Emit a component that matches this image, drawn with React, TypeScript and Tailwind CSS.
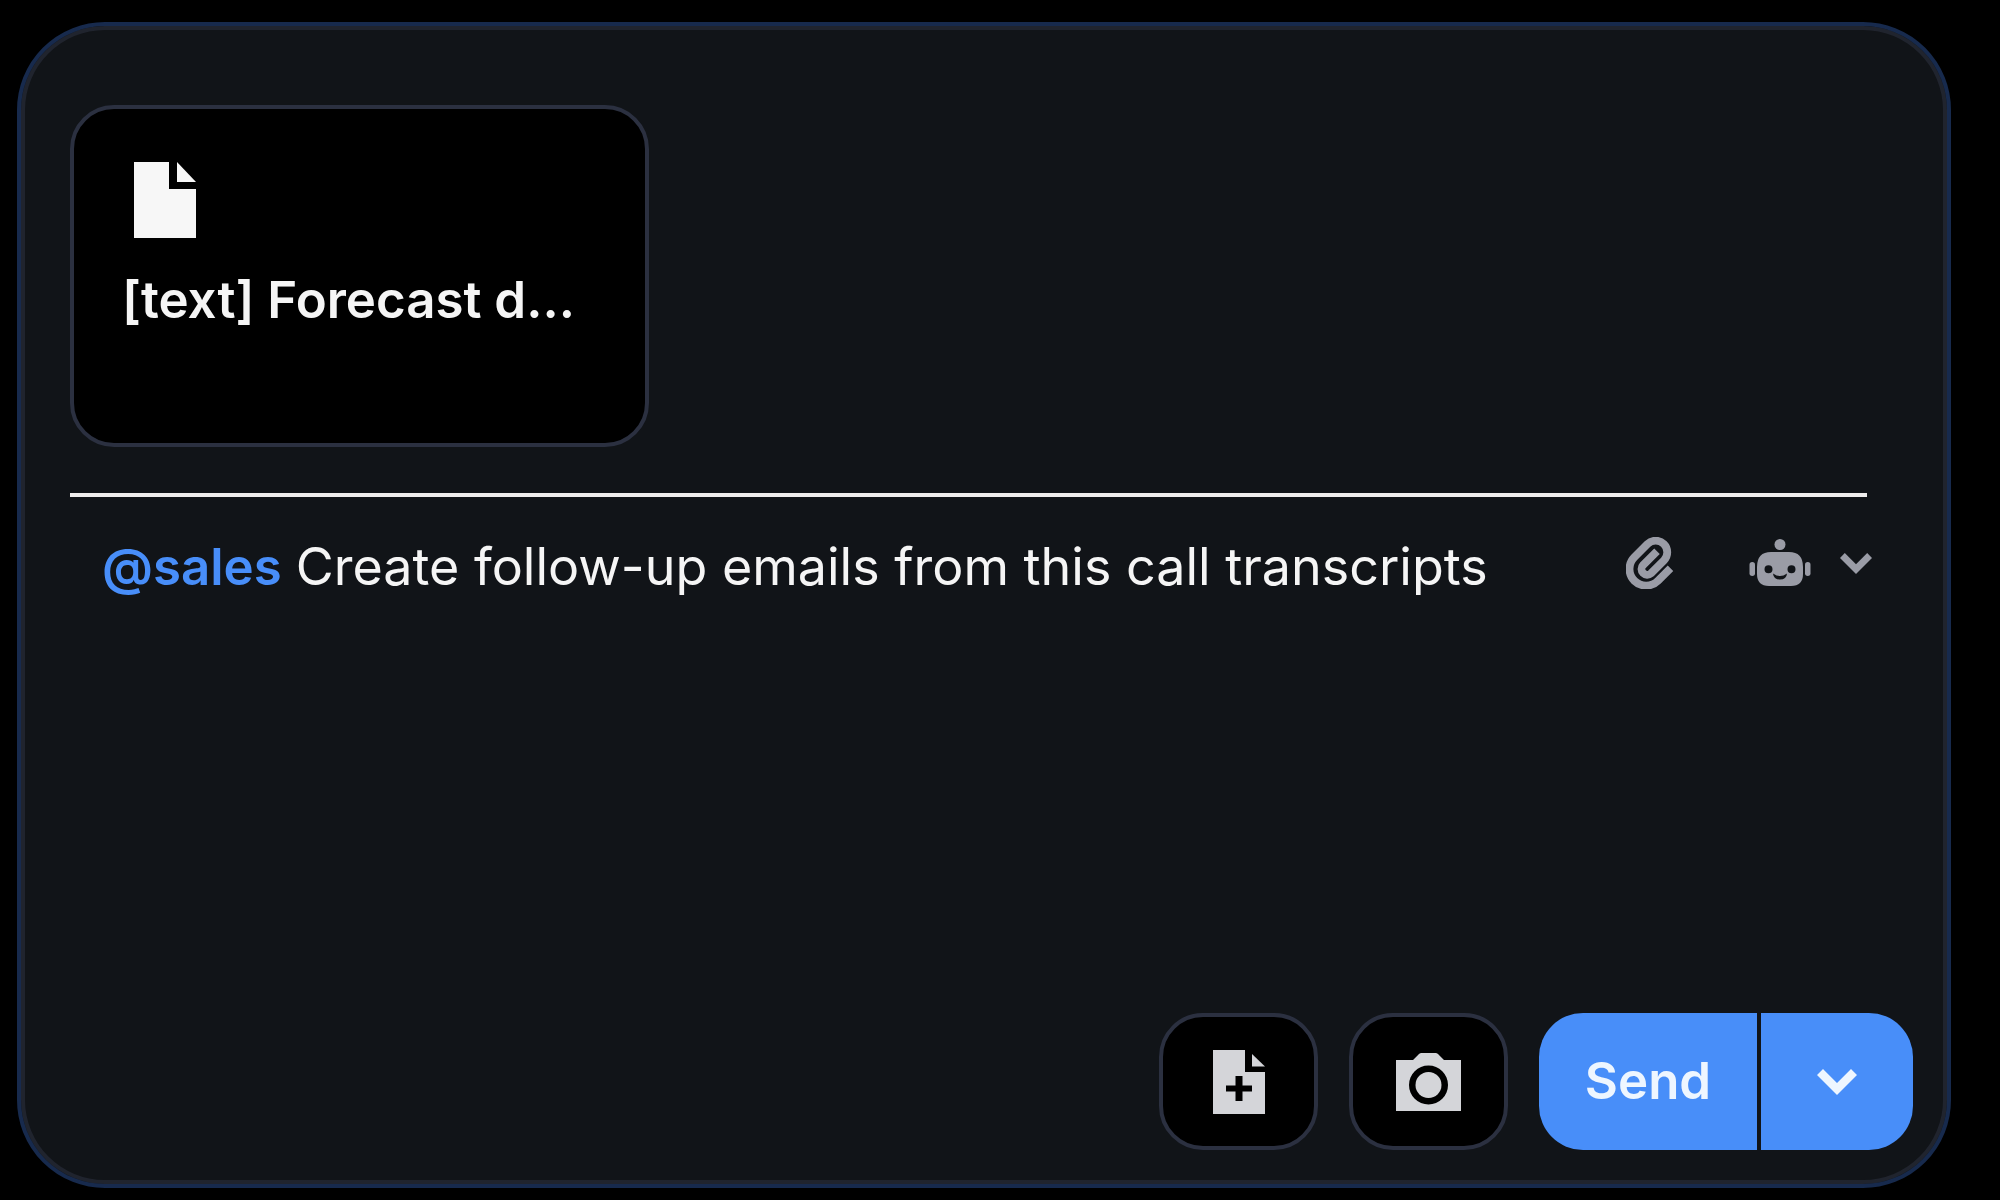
import { useState } from "react";

type IconProps = { className?: string };

function FileIcon({ className }: IconProps) {
  return (
    <svg viewBox="0 0 62 76" fill="currentColor" className={className} aria-hidden="true">
      <path d="M0 0H35V27H62V76H0Z" />
      <path d="M43 0L62 20H43Z" />
    </svg>
  );
}

function FilePlusIcon({ className }: IconProps) {
  return (
    <svg viewBox="0 0 52 64" fill="currentColor" className={className} aria-hidden="true">
      <path
        fillRule="evenodd"
        d="M0 0H32V22H52V64H0ZM22.5 26V35.5H13V41.5H22.5V51H29.5V41.5H39V35.5H29.5V26Z"
      />
      <path d="M39 4L52 16.500H39Z" />
    </svg>
  );
}

function CameraIcon({ className }: IconProps) {
  return (
    <svg viewBox="0 0 65 58" fill="currentColor" className={className} aria-hidden="true">
      <path
        fillRule="evenodd"
        d="M0 7H17L23 1Q24 0 25.500 0H39.500Q41 0 42 1L48 7H65V58H0ZM32.500 12.500A19.500 19.500 0 1 0 32.500 51.500A19.500 19.500 0 1 0 32.500 12.500Z"
      />
      <circle cx="32.500" cy="32" r="13" />
    </svg>
  );
}

function PaperclipIcon({ className }: IconProps) {
  return (
    <svg viewBox="0 0 48 52" fill="none" stroke="currentColor" strokeWidth="7.800" className={className} aria-hidden="true">
      <path d="M44.500 31.200L32 43.700A16.500 16.500 0 0 1 8.300 20.300L21.500 7.100A11.500 11.500 0 0 1 37.900 23.400L25 36.300A5.700 5.700 0 0 1 17 28.200L31 14.200" />
    </svg>
  );
}

function RobotIcon({ className }: IconProps) {
  return (
    <svg viewBox="0 0 62 48" fill="currentColor" className={className} aria-hidden="true">
      <circle cx="31" cy="5.500" r="5.500" />
      <rect x="0.500" y="23" width="5.500" height="14" rx="2.750" />
      <rect x="56" y="23" width="5.500" height="14" rx="2.750" />
      <path
        fillRule="evenodd"
        d="M22 13H40Q54 13 54 28V35Q54 47 42 47H20Q8 47 8 35V28Q8 13 22 13ZM19.500 26.200a4 4 0 1 0 0 8a4 4 0 1 0 0-8ZM42.500 26.200a4 4 0 1 0 0 8a4 4 0 1 0 0-8ZM24 34.500Q24.500 40.500 31 40.500Q37.500 40.500 38 34.500Q34.500 37 31 37Q27.500 37 24 34.500Z"
      />
    </svg>
  );
}

function ChevronIcon({ className }: IconProps) {
  return (
    <svg viewBox="0 0 40 26" fill="currentColor" className={className} aria-hidden="true">
      <path d="M6 0L20 14L34 0L40 6L20 26L0 6Z" />
    </svg>
  );
}

export default function App() {
  const [message, setMessage] = useState("Create follow-up emails from this call transcripts");

  return (
    <main className="flex min-h-screen flex-col bg-black pt-[22px] pr-[49px] pb-3 pl-[17px] font-['Inter',sans-serif] text-[#f5f5f5]">
      <form
        onSubmit={(e) => e.preventDefault()}
        className="flex flex-1 flex-col rounded-[88px] border-4 border-[#172a4d] bg-[#111418] pt-[79px] pr-[34px] pb-[34px] pl-[49px] shadow-[inset_0_0_0_4px_#20242e]"
      >
        <section className="flex h-[342px] w-[579px] flex-col rounded-[44px] border-4 border-[#2b3040] bg-black px-12 pt-[53px]">
          <FileIcon className="ml-3 h-[76px] w-[62px] text-[#f7f7f7]" />
          <p className="mt-[30px] text-[51px] leading-[64px] font-semibold whitespace-nowrap">[text] Forecast d...</p>
        </section>

        <hr className="mt-[46px] mr-[46px] border-t-4 border-[#eeecec]" />

        <div className="mt-[34px] mr-[41px] flex items-start">
          <div className="mt-1 flex min-w-0 flex-1 items-center">
            <label htmlFor="message" className="ml-8 text-[51px] leading-[64px] font-semibold text-[#488ef9]">
              @sales
            </label>
            <input
              id="message"
              type="text"
              value={message}
              onChange={(e) => setMessage(e.target.value)}
              className="ml-[14px] h-16 min-w-0 flex-1 bg-transparent text-[52px] leading-[64px] outline-none"
            />
          </div>
          <div className="flex h-16 items-center text-[#9a9ca6]">
            <button type="button" aria-label="Attach file" className="ml-6">
              <PaperclipIcon className="h-[52px] w-12" />
            </button>
            <button type="button" aria-label="Choose assistant" className="ml-[75px] flex items-center gap-[29px]">
              <RobotIcon className="h-12 w-[62px]" />
              <ChevronIcon className="h-[21px] w-8" />
            </button>
          </div>
        </div>

        <div className="mt-auto flex items-center justify-end gap-[31px]">
          <button
            type="button"
            aria-label="Add file"
            className="flex h-[137px] w-[159px] items-center justify-center rounded-[44px] border-4 border-[#2b3040] bg-black text-[#d4d5d9]"
          >
            <FilePlusIcon className="h-16 w-[52px]" />
          </button>
          <button
            type="button"
            aria-label="Take screenshot"
            className="flex h-[137px] w-[159px] items-center justify-center rounded-[44px] border-4 border-[#2b3040] bg-black text-[#d4d5d9]"
          >
            <CameraIcon className="h-[58px] w-[65px]" />
          </button>
          <div className="flex gap-1 text-[#eef6ff]">
            <button type="submit" className="h-[137px] w-[218px] rounded-l-[44px] bg-[#488ef9] text-[51px] font-semibold">
              Send
            </button>
            <button
              type="button"
              aria-label="More send options"
              className="flex h-[137px] w-[152px] items-center justify-center rounded-r-[44px] bg-[#488ef9]"
            >
              <ChevronIcon className="h-[26px] w-10" />
            </button>
          </div>
        </div>
      </form>
    </main>
  );
}
